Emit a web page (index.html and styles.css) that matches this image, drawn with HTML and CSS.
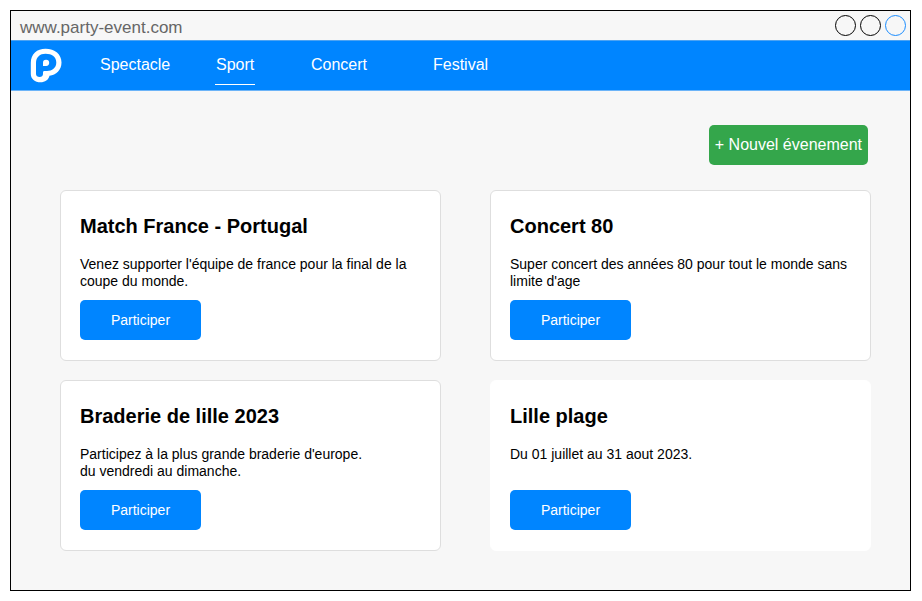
FILE: index.html
```html
<!DOCTYPE html>
<html lang="fr">
<head>
<meta charset="utf-8">
<meta name="viewport" content="width=device-width, initial-scale=1">
<title>Party Event</title>
<link rel="stylesheet" href="styles.css">
</head>
<body>
<div class="window">
  <div class="titlebar">
    <span class="address">www.party-event.com</span>
    <div class="window-controls">
      <span class="control"></span>
      <span class="control"></span>
      <span class="control control-active"></span>
    </div>
  </div>
  <header class="navbar">
    <a class="logo" href="#" aria-label="Accueil">
      <svg width="32" height="36" viewBox="0 0 32 36">
        <path fill="#fff" d="M.8 15C.8 6 7 .8 15.500 .8C25 .8 31.500 6.500 31.500 14.500C31.500 22 26 27 19.500 27.800C18.500 32 15 34.300 10.500 34.300C5 34.300 .8 31 .8 26Z"/>
        <path fill="#0085ff" d="M6 15C6 9 10 5.700 15.500 5.700C22 5.700 26.300 9 26.300 14.500C26.300 20 22 23 17 23H14.500C13.500 23 13 23.500 13 24.500V26C13 28 11.500 29 9.700 29C7.500 29 6 28 6 26Z"/>
        <path fill="#fff" d="M13 18V15A3.100 3.100 0 1 1 16.100 18Z"/>
      </svg>
    </a>
    <nav class="menu">
      <a class="menu-link" href="#">Spectacle</a>
      <a class="menu-link menu-link-current" href="#" aria-current="page">Sport</a>
      <a class="menu-link" href="#">Concert</a>
      <a class="menu-link" href="#">Festival</a>
    </nav>
  </header>
  <main class="content">
    <div class="toolbar">
      <button class="button button-new" type="button">+ Nouvel évenement</button>
    </div>
    <div class="events">
      <article class="card">
        <h2 class="card-title">Match France - Portugal</h2>
        <p class="card-text">Venez supporter l'équipe de france pour la final de la coupe du monde.</p>
        <button class="button button-join" type="button">Participer</button>
      </article>
      <article class="card">
        <h2 class="card-title">Concert 80</h2>
        <p class="card-text">Super concert des années 80 pour tout le monde sans limite d'age</p>
        <button class="button button-join" type="button">Participer</button>
      </article>
      <article class="card">
        <h2 class="card-title">Braderie de lille 2023</h2>
        <p class="card-text">Participez à la plus grande braderie d'europe.<br>du vendredi au dimanche.</p>
        <button class="button button-join" type="button">Participer</button>
      </article>
      <article class="card card-plain">
        <h2 class="card-title">Lille plage</h2>
        <p class="card-text">Du 01 juillet au 31 aout 2023.</p>
        <button class="button button-join" type="button">Participer</button>
      </article>
    </div>
  </main>
</div>
</body>
</html>
```
FILE: styles.css
```css
* {
  box-sizing: border-box;
}

body {
  margin: 0;
  padding: 10px 11px 10px 10px;
  min-height: 100vh;
  display: flex;
  background: #fff;
  color: #000;
  font-family: "Liberation Sans", Arial, sans-serif;
  font-size: 14px;
  line-height: 17px;
}

.window {
  flex: 1;
  border: 1px solid #000;
  background: #f7f7f7;
}

.titlebar {
  display: flex;
  align-items: center;
  justify-content: space-between;
  height: 29px;
  padding: 0 4px 0 9px;
}

.address {
  padding-top: 4px;
  color: #666;
  font-size: 17px;
  line-height: 20px;
}

.window-controls {
  display: flex;
  gap: 4px;
}

.control {
  width: 21px;
  height: 21px;
  border: 1px solid #000;
  border-radius: 50%;
}

.control-active {
  border-color: #1a8cff;
}

.navbar {
  display: flex;
  align-items: center;
  height: 51px;
  padding-left: 19px;
  border-top: 1px solid #4da3f2;
  border-bottom: 1px solid #6cb4f8;
  background: #0085ff;
}

.logo {
  display: block;
  width: 69px;
  height: 36px;
}

.menu {
  display: grid;
  grid-template-columns: 116px 95px 122px auto;
  justify-items: start;
}

.menu-link {
  padding: 10px 1px;
  border-bottom: 1px solid transparent;
  color: #fff;
  font-size: 16px;
  line-height: 18px;
  text-decoration: none;
}

.menu-link-current {
  border-bottom-color: #fff;
}

.content {
  padding: 34px 39px 39px 49px;
}

.toolbar {
  display: flex;
  justify-content: flex-end;
  padding-right: 3px;
  margin-bottom: 25px;
}

.button {
  height: 40px;
  border: 0;
  border-radius: 5px;
  color: #fff;
  font-family: inherit;
  cursor: pointer;
}

.button-new {
  padding: 0 6px;
  background: #34a64b;
  font-size: 16px;
}

.button-join {
  width: 121px;
  margin-top: auto;
  background: #0085ff;
  font-size: 14px;
}

.events {
  display: grid;
  grid-template-columns: 1fr 1fr;
  gap: 19px 49px;
}

.card {
  display: flex;
  flex-direction: column;
  align-items: flex-start;
  min-height: 171px;
  padding: 23px 19px 19px;
  border: 1px solid #dedede;
  border-radius: 6px;
  background: #fff;
}

.card .button {
  margin-bottom: 1px;
}

.card-plain {
  border-color: #fff;
}

.card-title {
  margin: 0 0 18px;
  font-size: 20px;
  line-height: 24px;
}

.card-text {
  margin: 0;
}
```
